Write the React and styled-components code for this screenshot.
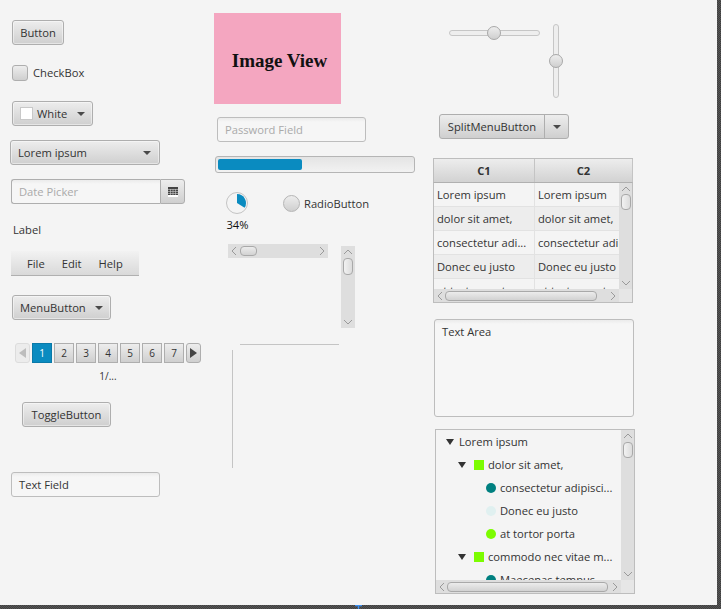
import React from 'react';
import styled, { createGlobalStyle } from 'styled-components';

const Global = createGlobalStyle`
  html, body { margin: 0; padding: 0; background: #f4f4f4; }
  body { font-family: "Open Sans", "Noto Sans", sans-serif; font-size: 11.2px; line-height: 16px; color: #333; }
`;

const btnFace = 'linear-gradient(#ededed, #cfcfcf)';
const edgeFace = 'repeating-conic-gradient(#565656 0 25%, #3f3f3f 0 50%) 0 0 / 2px 2px';

const Window = styled.div`
  width: 721px;
  height: 609px;
  display: flex;
  flex-direction: column;
  overflow: hidden;
`;
const Canvas = styled.div`
  flex: 1;
  display: flex;
  min-height: 0;
`;
const Stage = styled.div`
  flex: 1;
  display: flex;
  min-width: 0;
`;
const RightEdge = styled.div`
  width: 4px;
  background: ${edgeFace};
`;
const BottomEdge = styled.div`
  height: 4px;
  background: ${edgeFace};
  position: relative;
`;
const GuideMark = styled.svg`
  position: absolute;
  left: 355px;
  top: 0;
`;
const Column = styled.div`
  width: ${p => p.$w}px;
  flex: none;
  display: flex;
  flex-direction: column;
  align-items: flex-start;
`;
// one placed control: margins keep the spacing of the reference form
const Slot = styled.div`
  margin-top: ${p => p.$t || 0}px;
  margin-left: ${p => p.$l || 0}px;
  display: flex;
  align-items: ${p => p.$align || 'center'};
  gap: ${p => p.$gap || 0}px;
`;

const Btn = styled.div`
  box-sizing: border-box;
  height: 25px;
  width: ${p => p.$w}px;
  border: 1px solid #aeaeae;
  border-radius: 3px;
  background: ${btnFace};
  box-shadow: inset 0 0 0 1px rgba(255,255,255,.45);
  display: flex;
  align-items: center;
  justify-content: ${p => p.$justify || 'center'};
  padding: ${p => p.$pad || '0'};
  white-space: nowrap;
`;
const Caret = styled.span`
  width: 0; height: 0;
  border-left: 4px solid transparent;
  border-right: 4px solid transparent;
  border-top: 4px solid #4a4a4a;
  margin-left: ${p => p.$auto ? 'auto' : '0'};
`;
const Check = styled.div`
  width: 16px; height: 16px;
  box-sizing: border-box;
  border: 1px solid #aeaeae;
  border-radius: 3px;
  background: ${btnFace};
`;
const Swatch = styled.span`
  width: 13px; height: 13px;
  box-sizing: border-box;
  background: #fff;
  border: 1px solid #c8c8c8;
  margin-right: 4px;
`;
const Field = styled.div`
  box-sizing: border-box;
  height: 25px;
  width: ${p => p.$w}px;
  border: 1px solid #bdbdbd;
  border-radius: 3px;
  background: linear-gradient(#ebebeb, #f6f6f6 4px);
  display: flex;
  align-items: center;
  padding-left: 7px;
  color: ${p => p.$ph ? '#aaa' : '#333'};
`;
const DateWrap = styled.div`
  display: flex;
  width: 174px;
  height: 25px;
`;
const DateInput = styled(Field)`
  flex: 1;
  border-right: none;
  border-color: #aeaeae;
  border-radius: 3px 0 0 3px;
`;
const DateBtn = styled.div`
  width: 25px;
  box-sizing: border-box;
  border: 1px solid #aeaeae;
  border-radius: 0 3px 3px 0;
  background: ${btnFace};
  display: flex;
  align-items: center;
  justify-content: center;
`;
const MenuBar = styled.div`
  width: 128px;
  height: 25px;
  box-sizing: border-box;
  border-bottom: 1px solid #b0b0b0;
  background: linear-gradient(#f2f2f2, #d9d9d9);
  display: flex;
  align-items: center;
  padding: 1px 0 0 16px;
  gap: 17px;
`;
const Pager = styled.div`
  display: flex;
  gap: 2px;
`;
const Page = styled.div`
  width: 20px; height: 20px;
  box-sizing: border-box;
  border: 1px solid ${p => p.$on ? '#0a79a8' : '#aeaeae'};
  background: ${p => p.$on ? '#0a8bc0' : btnFace};
  color: ${p => p.$on ? '#fff' : '#333'};
  font-size: 10px;
  display: flex;
  align-items: center;
  justify-content: center;
`;
const PageArrow = styled.div`
  width: 15px; height: 20px;
  box-sizing: border-box;
  border: 1px solid ${p => p.$off ? '#dcdcdc' : '#aeaeae'};
  border-radius: 3px;
  background: ${p => p.$off ? '#ececec' : btnFace};
  display: flex;
  align-items: center;
  justify-content: center;
`;
const Tri = styled.span`
  width: 0; height: 0;
  border-top: 5px solid transparent;
  border-bottom: 5px solid transparent;
  ${p => p.$left ? `border-right: 7px solid ${p.$off ? '#bdbdbd' : '#444'};` : `border-left: 7px solid #444;`}
`;
const PageNote = styled.div`
  font-size: 10px;
  width: 186px;
  text-align: center;
`;
const Picture = styled.div`
  width: 127px; height: 91px;
  box-sizing: border-box;
  padding: 4px 0 0 4px;
  background: #f4a6c0;
  color: #111;
  display: flex;
  align-items: center;
  justify-content: center;
  font: bold 19px "Liberation Serif", serif;
`;
const Progress = styled.div`
  width: 200px; height: 17px;
  box-sizing: border-box;
  border: 1px solid #b5b5b5;
  border-radius: 3px;
  background: linear-gradient(#e4e4e4, #f2f2f2);
  padding: 2px;
`;
const ProgressFill = styled.div`
  height: 100%;
  background: #0a8bc0;
  border-radius: 2px;
`;
const Indicator = styled.div`
  width: 23px;
  display: flex;
  flex-direction: column;
  align-items: center;
  gap: 2px;
  color: #111;
  white-space: nowrap;
`;
const Radio = styled.div`
  width: 17px; height: 17px;
  box-sizing: border-box;
  border: 1px solid #b5b5b5;
  border-radius: 50%;
  background: ${btnFace};
`;
const HBar = styled.div`
  width: ${p => p.$w}px;
  height: 14px;
  flex: none;
  background: #dedede;
  display: flex;
  align-items: center;
  box-sizing: border-box;
`;
const VBar = styled.div`
  width: 14px;
  height: ${p => p.$h}px;
  flex: none;
  background: #dedede;
  display: flex;
  flex-direction: column;
  align-items: center;
  box-sizing: border-box;
`;
const HThumb = styled.div`
  width: ${p => p.$w}px;
  height: 10px;
  flex: none;
  box-sizing: border-box;
  border: 1px solid #a9a9a9;
  border-radius: 4px;
  background: linear-gradient(#ececec, #d2d2d2);
`;
const VThumb = styled.div`
  width: 10px;
  height: ${p => p.$h}px;
  flex: none;
  box-sizing: border-box;
  border: 1px solid #a9a9a9;
  border-radius: 4px;
  background: linear-gradient(90deg, #f2f2f2, #dcdcdc);
`;
const HSep = styled.div`
  width: 99px; height: 1px; background: #c4c4c4;
`;
const VSep = styled.div`
  width: 1px; height: 118px; background: #c4c4c4;
`;
const HTrack = styled.div`
  width: 91px; height: 6px;
  box-sizing: border-box;
  border: 1px solid #c6c6c6;
  border-radius: 3px;
  background: #eee;
  position: relative;
`;
const VTrack = styled.div`
  width: 6px; height: 74px;
  box-sizing: border-box;
  border: 1px solid #c6c6c6;
  border-radius: 3px;
  background: #eee;
  position: relative;
`;
const Knob = styled.div`
  position: absolute;
  left: ${p => p.$x};
  top: ${p => p.$y};
  transform: translate(-50%, -50%);
  width: 14px; height: 14px;
  box-sizing: border-box;
  border: 1px solid #a8a8a8;
  border-radius: 50%;
  background: ${btnFace};
`;
const SplitWrap = styled.div`
  display: flex;
  width: 130px;
  height: 25px;
  box-sizing: border-box;
  border: 1px solid #aeaeae;
  border-radius: 3px;
  background: ${btnFace};
`;
const SplitMain = styled.div`
  width: 105px;
  box-sizing: border-box;
  border-right: 1px solid #aeaeae;
  display: flex;
  align-items: center;
  justify-content: center;
`;
const SplitArrow = styled.div`
  flex: 1;
  display: flex;
  align-items: center;
  justify-content: center;
`;
const Scroller = styled.div`
  box-sizing: border-box;
  width: ${p => p.$w}px;
  height: ${p => p.$h}px;
  border: 1px solid #bdbdbd;
  background: #f4f4f4;
  display: grid;
  grid-template-columns: 1fr 14px;
  grid-template-rows: 1fr 14px;
  overflow: hidden;
`;
const ScrollBody = styled.div`
  overflow: hidden;
  min-width: 0;
  min-height: 0;
`;
const Corner = styled.div`
  background: #e6e6e6;
`;
const TableHead = styled.div`
  display: flex;
  height: 25px;
  flex: none;
  box-sizing: border-box;
  border: 1px solid #bdbdbd;
  border-bottom: 1px solid #b0b0b0;
  background: linear-gradient(#ededed, #d2d2d2);
  font-weight: 700;
`;
const HeadCell = styled.div`
  width: ${p => p.$w}px;
  flex: none;
  box-sizing: border-box;
  border-right: 1px solid #c4c4c4;
  display: flex;
  align-items: center;
  justify-content: center;
`;
const TableShell = styled.div`
  width: 200px;
  height: 145px;
  display: flex;
  flex-direction: column;
`;
const TableBodyWrap = styled(Scroller)`
  border-top: none;
  flex: 1;
  height: auto;
  min-height: 0;
`;
const Row = styled.div`
  display: flex;
  height: 24px;
  background: ${p => p.$odd ? '#ededed' : '#f4f4f4'};
  border-bottom: 1px solid #e2e2e2;
  box-sizing: border-box;
`;
const Cell = styled.div`
  width: ${p => p.$w}px;
  flex: none;
  box-sizing: border-box;
  border-right: 1px solid #e2e2e2;
  padding-left: 3px;
  line-height: 23px;
  white-space: nowrap;
  overflow: hidden;
`;
const TextArea = styled.div`
  box-sizing: border-box;
  width: 200px;
  height: 98px;
  border: 1px solid #bdbdbd;
  border-radius: 3px;
  background: linear-gradient(#ebebeb, #f6f6f6 4px);
  padding: 4px 7px;
`;
const TreeRow = styled.div`
  height: 23px;
  display: flex;
  align-items: center;
  padding-left: ${p => p.$indent}px;
  white-space: nowrap;
`;
const Disclose = styled.span`
  width: 0; height: 0;
  flex: none;
  border-left: 4px solid transparent;
  border-right: 4px solid transparent;
  border-top: 6px solid #333;
  margin-right: ${p => p.$m}px;
`;
const Square = styled.span`
  width: 10px; height: 10px;
  flex: none;
  background: #7cfc00;
  margin-right: 4px;
`;
const Dot = styled.span`
  width: 10px; height: 10px;
  flex: none;
  border-radius: 50%;
  background: ${p => p.$c};
  margin-right: 4px;
`;
const Spacer = styled.div`flex: 1;`;

const rows = ['Lorem ipsum', 'dolor sit amet,', 'consectetur adipisci', 'Donec eu justo', 'at tortor porta'];

function ScrollUp({ size }) {
  return <svg width="14" height={size} viewBox={`0 0 14 ${size}`}><path d="M3 8l4-4 4 4" fill="none" stroke="#9a9a9a" strokeWidth="1"/></svg>;
}
function ScrollDown() {
  return <svg width="14" height="12" viewBox="0 0 14 12"><path d="M3 4l4 4 4-4" fill="none" stroke="#9a9a9a" strokeWidth="1"/></svg>;
}
function ScrollLeft({ size }) {
  return <svg width={size} height="14" viewBox={`0 0 ${size} 14`}><path d="M8 3L4 7l4 4" fill="none" stroke="#9a9a9a" strokeWidth="1"/></svg>;
}
function ScrollRight() {
  return <svg width="12" height="14" viewBox="0 0 12 14"><path d="M4 3l4 4-4 4" fill="none" stroke="#9a9a9a" strokeWidth="1"/></svg>;
}

function HScroll({ w, thumb, lead = 12 }) {
  return (
    <HBar $w={w}>
      <ScrollLeft size={lead} />
      <HThumb $w={thumb} />
      <Spacer />
      <ScrollRight />
    </HBar>
  );
}
function VScroll({ h, thumb, lead = 12 }) {
  return (
    <VBar $h={h}>
      <ScrollUp size={lead} />
      <VThumb $h={thumb} />
      <Spacer />
      <ScrollDown />
    </VBar>
  );
}

export default function App() {
  return (
    <Window>
      <Global />
      <Canvas>
        <Stage>
          <Column $w={214}>
            <Slot $t={20} $l={12}><Btn $w={52}>Button</Btn></Slot>
            <Slot $t={20} $l={12} $gap={5}><Check />CheckBox</Slot>
            <Slot $t={20} $l={12}><Btn $w={81} $justify="flex-start" $pad="0 7px"><Swatch />White<Caret $auto /></Btn></Slot>
            <Slot $t={14} $l={10}><Btn $w={150} $justify="space-between" $pad="0 8px 0 7px">Lorem ipsum<Caret /></Btn></Slot>
            <Slot $t={14} $l={11}>
              <DateWrap>
                <DateInput $ph>Date Picker</DateInput>
                <DateBtn>
                  <svg width="10" height="10" viewBox="0 0 10 10"><rect width="10" height="10" fill="#fff"/><rect y="0" width="10" height="8" fill="#444"/><path d="M0 2.5h10M0 4.5h10M0 6.5h10M2.5 2v6M5 2v6M7.5 2v6" stroke="#ccc" strokeWidth=".6"/></svg>
                </DateBtn>
              </DateWrap>
            </Slot>
            <Slot $t={18} $l={13}>Label</Slot>
            <Slot $t={13} $l={11}><MenuBar><span>File</span><span>Edit</span><span>Help</span></MenuBar></Slot>
            <Slot $t={19} $l={12}><Btn $w={99} $justify="space-between" $pad="0 7px">MenuButton<Caret /></Btn></Slot>
            <Slot $t={23} $l={15}>
              <Pager>
                <PageArrow $off><Tri $left $off /></PageArrow>
                <Page $on>1</Page>
                <Page>2</Page><Page>3</Page><Page>4</Page><Page>5</Page><Page>6</Page><Page>7</Page>
                <PageArrow><Tri /></PageArrow>
              </Pager>
            </Slot>
            <Slot $t={5} $l={15}><PageNote>1/...</PageNote></Slot>
            <Slot $t={18} $l={22}><Btn $w={89}>ToggleButton</Btn></Slot>
            <Slot $t={45} $l={11}><Field $w={149}>Text Field</Field></Slot>
          </Column>
          <Column $w={219}>
            <Slot $t={13}><Picture>Image View</Picture></Slot>
            <Slot $t={13} $l={3}><Field $w={149} $ph>Password Field</Field></Slot>
            <Slot $t={14} $l={1}><Progress><ProgressFill style={{ width: '43.5%' }} /></Progress></Slot>
            <Slot $t={19} $l={12} $align="flex-start" $gap={34}>
              <Indicator>
                <svg width="23" height="23" viewBox="0 0 23 23">
                  <circle cx="11" cy="11" r="10.5" fill="#f4f4f4" stroke="#c4c4c4"/>
                  <path d="M11 2A9 9 0 0 1 18.6 15.8L11 11Z" fill="#0a8bc0"/>
                </svg>
                34%
              </Indicator>
              <Slot $t={3} $gap={4}><Radio />RadioButton</Slot>
            </Slot>
            <Slot $t={11} $l={14} $align="flex-start" $gap={13}>
              <HScroll w={100} thumb={17} />
              <Slot $t={2}><VScroll h={82} thumb={17} /></Slot>
            </Slot>
            <Slot $t={16} $l={26}><HSep /></Slot>
            <Slot $t={5} $l={18}><VSep /></Slot>
          </Column>
          <Column $w={200}>
            <Slot $t={24} $l={16} $align="flex-start" $gap={13}>
              <Slot $t={6}><HTrack><Knob $x="49%" $y="50%" /></HTrack></Slot>
              <VTrack><Knob $x="50%" $y="50%" /></VTrack>
            </Slot>
            <Slot $t={16} $l={6}>
              <SplitWrap>
                <SplitMain>SplitMenuButton</SplitMain>
                <SplitArrow><Caret /></SplitArrow>
              </SplitWrap>
            </Slot>
            <Slot $t={19}>
              <TableShell>
                <TableHead>
                  <HeadCell $w={101}>C1</HeadCell>
                  <HeadCell $w={98}>C2</HeadCell>
                </TableHead>
                <TableBodyWrap $w={200}>
                  <ScrollBody>
                    {rows.map((r, i) => (
                      <Row key={r} $odd={i % 2 === 1}>
                        <Cell $w={101}>{i === 2 ? 'consectetur adi...' : r}</Cell>
                        <Cell $w={98}>{i === 2 ? 'consectetur adipi' : r}</Cell>
                      </Row>
                    ))}
                  </ScrollBody>
                  <VScroll h={106} thumb={16} lead={11} />
                  <HScroll w={185} thumb={152} lead={11} />
                  <Corner />
                </TableBodyWrap>
              </TableShell>
            </Slot>
            <Slot $t={16} $l={1}><TextArea>Text Area</TextArea></Slot>
            <Slot $t={12} $l={2}>
              <Scroller $w={200} $h={165}>
                <ScrollBody>
                  <TreeRow $indent={10}><Disclose $m={5} />Lorem ipsum</TreeRow>
                  <TreeRow $indent={22}><Disclose $m={8} /><Square />dolor sit amet,</TreeRow>
                  <TreeRow $indent={50}><Dot $c="#008080" />consectetur adipisci...</TreeRow>
                  <TreeRow $indent={50}><Dot $c="#e0f0f0" />Donec eu justo</TreeRow>
                  <TreeRow $indent={50}><Dot $c="#7cfc00" />at tortor porta</TreeRow>
                  <TreeRow $indent={22}><Disclose $m={8} /><Square />commodo nec vitae m...</TreeRow>
                  <TreeRow $indent={50}><Dot $c="#008080" />Maecenas tempus</TreeRow>
                </ScrollBody>
                <VScroll h={150} thumb={16} />
                <HScroll w={185} thumb={161} lead={11} />
                <Corner />
              </Scroller>
            </Slot>
          </Column>
        </Stage>
        <RightEdge />
      </Canvas>
      <BottomEdge>
        <GuideMark width="7" height="4" viewBox="0 0 7 4"><path d="M0 .5h7M3.5 0v4" stroke="#3d8ff0" strokeWidth="1.4"/></GuideMark>
      </BottomEdge>
    </Window>
  );
}
